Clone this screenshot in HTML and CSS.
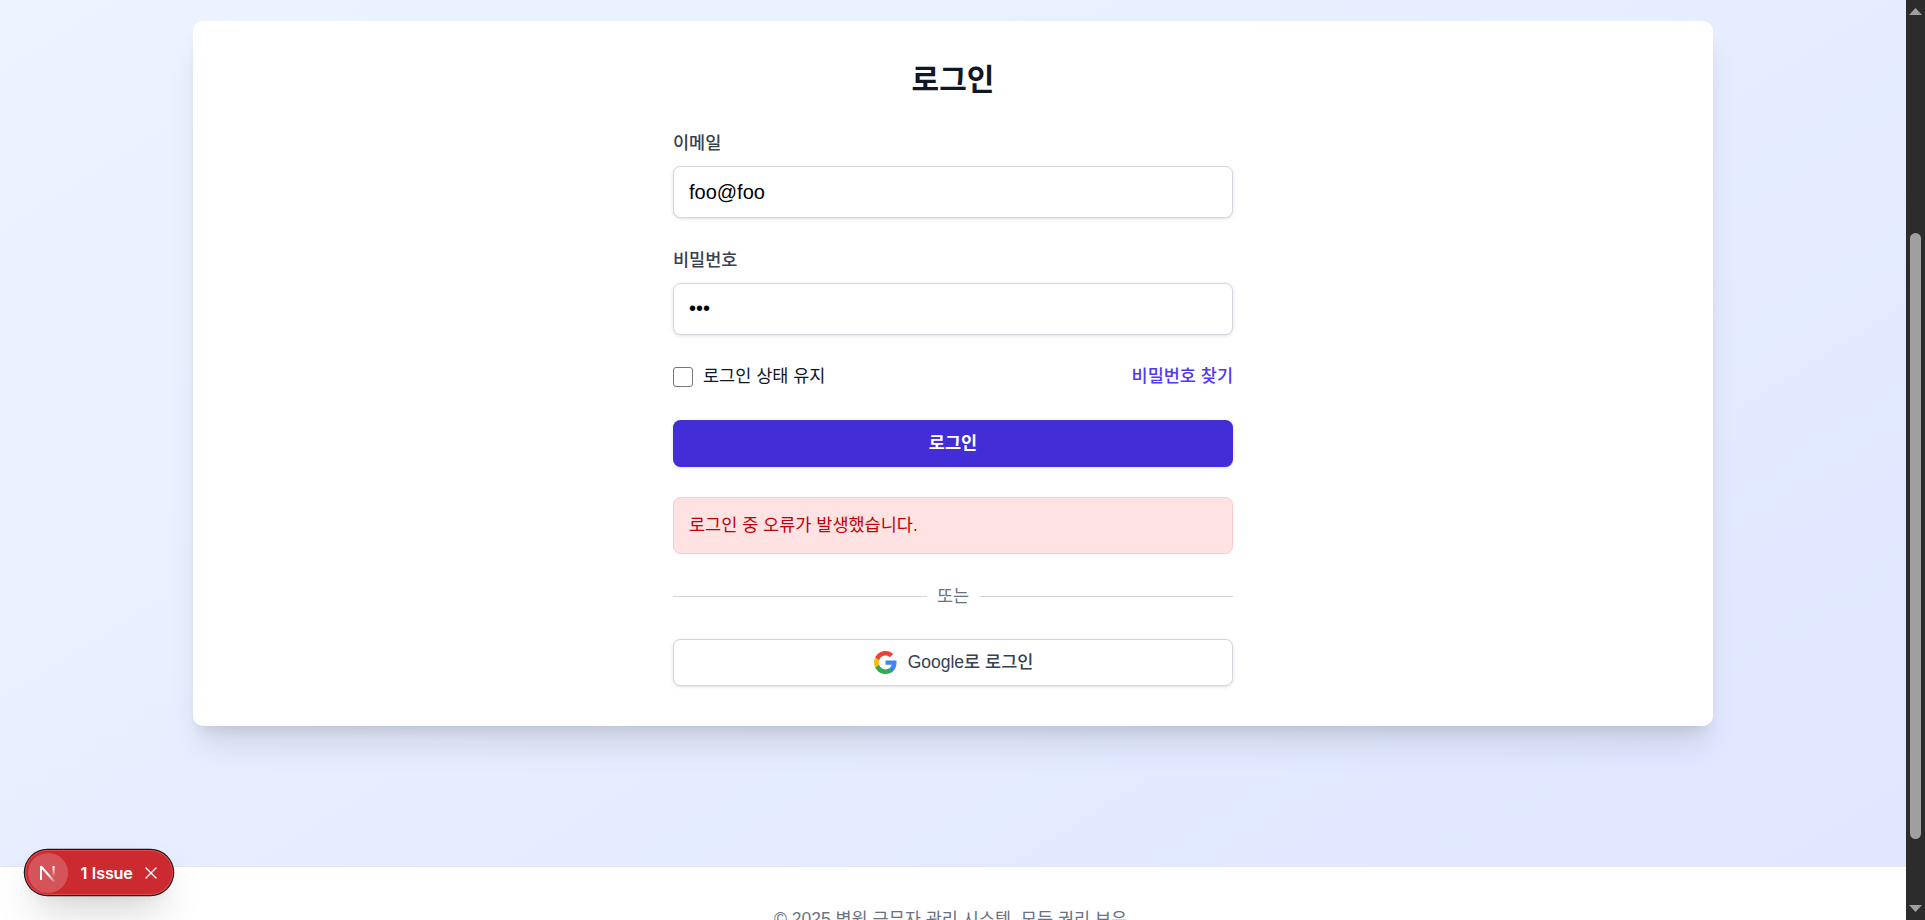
FILE: index.html
```html
<!DOCTYPE html>
<html lang="ko">
<head>
<meta charset="utf-8">
<title>로그인</title>
<link rel="stylesheet" href="styles.css">
</head>
<body>
<div class="window">
  <div class="page">
    <main class="main">
      <section class="card">
        <form class="form">
          <h1 class="title">로그인</h1>
          <div class="field">
            <label class="label" for="email">이메일</label>
            <input class="input" id="email" type="text" value="foo@foo">
          </div>
          <div class="field">
            <label class="label" for="password">비밀번호</label>
            <input class="input password" id="password" type="password" value="foo">
          </div>
          <div class="options">
            <label class="remember"><input class="checkbox" type="checkbox"><span>로그인 상태 유지</span></label>
            <a class="link">비밀번호 찾기</a>
          </div>
          <button class="submit" type="button">로그인</button>
          <div class="error">로그인 중 오류가 발생했습니다.</div>
          <div class="divider"><span>또는</span></div>
          <button class="google" type="button">
            <svg class="google-icon" viewBox="0 0 24 24">
              <path fill="#4285f4" d="M22.56 12.25c0-.78-.07-1.53-.2-2.25H12v4.26h5.92c-.26 1.37-1.04 2.53-2.21 3.31v2.77h3.57c2.08-1.92 3.28-4.74 3.28-8.09z"/>
              <path fill="#34a853" d="M12 23c2.97 0 5.46-.98 7.28-2.66l-3.57-2.77c-.98.66-2.23 1.06-3.71 1.06-2.86 0-5.29-1.93-6.16-4.53H2.18v2.84C3.99 20.53 7.7 23 12 23z"/>
              <path fill="#fbbc05" d="M5.84 14.09c-.22-.66-.35-1.36-.35-2.09s.13-1.43.35-2.09V7.07H2.18C1.43 8.55 1 10.22 1 12s.43 3.45 1.18 4.93l3.66-2.84z"/>
              <path fill="#ea4335" d="M12 5.38c1.62 0 3.06.56 4.21 1.64l3.15-3.15C17.45 2.09 14.97 1 12 1 7.7 1 3.99 3.47 2.18 7.07l3.66 2.84c.87-2.6 3.3-4.53 6.16-4.53z"/>
            </svg>
            <span>Google로 로그인</span>
          </button>
        </form>
      </section>
    </main>
    <footer class="footer">© 2025 병원 근무자 관리 시스템. 모든 권리 보유.</footer>
  </div>
  <div class="scrollbar">
    <svg class="arrow" viewBox="0 0 13 7"><path d="M6.5 0 13 7H0z"/></svg>
    <div class="thumb"></div>
    <svg class="arrow arrow-down" viewBox="0 0 13 7"><path d="M0 0h13L6.5 7z"/></svg>
  </div>
</div>
<div class="issue">
  <span class="issue-logo">
    <svg width="18" height="20" viewBox="0 0 18 20" fill="none">
      <defs>
        <linearGradient id="stem" x1="0" y1="4" x2="0" y2="14" gradientUnits="userSpaceOnUse"><stop stop-color="#fff"/><stop offset="1" stop-color="#fff" stop-opacity="0"/></linearGradient>
        <linearGradient id="slash" x1="10" y1="11" x2="17" y2="19" gradientUnits="userSpaceOnUse"><stop stop-color="#fff"/><stop offset="1" stop-color="#fff" stop-opacity="0"/></linearGradient>
      </defs>
      <path d="M2 3.4 15.6 19" stroke="url(#slash)" stroke-width="2.2"/>
      <path d="M2 17V3" stroke="#fff" stroke-width="2"/>
      <path d="M14.6 3v11" stroke="url(#stem)" stroke-width="2"/>
    </svg>
  </span>
  <span class="issue-text">1 Issue</span>
  <svg class="issue-close" viewBox="0 0 12 12"><path d="M1 1l10 10M11 1 1 11" stroke="#fff" stroke-width="1.4" stroke-linecap="round"/></svg>
</div>
</body>
</html>
```
FILE: styles.css
```css
* { box-sizing: border-box; }
body {
  margin: 0;
  overflow: hidden;
  font-family: "Liberation Sans", "Noto Sans CJK KR", sans-serif;
  font-size: 17.5px;
  line-height: 25px;
  color: #101828;
}
.window { display: flex; height: 920px; overflow: hidden; }
.page { flex: 1; display: flex; flex-direction: column; }
.main {
  flex: 0 0 866px;
  padding-top: 21px;
  background: linear-gradient(to bottom right in oklab, #eff6ff, #e0e7ff) 0 -325px / 100% 1191px no-repeat;
}
.card {
  width: 1520px;
  height: 705px;
  margin: 0 auto;
  padding-top: 39px;
  background: #fff;
  border-radius: 10px;
  box-shadow: 0 25px 31px -6px rgb(0 0 0 / .1), 0 10px 12.5px -7.5px rgb(0 0 0 / .1);
}
.form { width: 560px; margin: 0 auto; display: flex; flex-direction: column; }
.title { margin: 0 0 31px; font-size: 30px; line-height: 40px; font-weight: 700; text-align: center; }
.field { display: flex; flex-direction: column; gap: 10px; margin-bottom: 30px; }
.label { font-weight: 500; color: #364153; }
.input {
  height: 52px;
  padding: 0 15px;
  border: 1px solid #d1d5dc;
  border-radius: 7.5px;
  background: #fff;
  color: #000;
  font: 20px "Liberation Sans", sans-serif;
  box-shadow: 0 1px 4px rgb(0 0 0 / .1), 0 1px 2px -1px rgb(0 0 0 / .1);
}
.password { padding-bottom: 2px; }
.options { display: flex; justify-content: space-between; align-items: center; height: 25px; margin: -1px 0 31px; }
.remember { display: flex; align-items: center; gap: 10px; }
.checkbox { appearance: none; width: 20px; height: 20px; margin: 0; border: 1px solid #767676; border-radius: 3px; background: #fff; }
.link { font-weight: 500; color: #4f39f6; }
.submit, .google { font: 500 17.5px/25px "Liberation Sans", "Noto Sans CJK KR", sans-serif; border-radius: 7.5px; padding: 0; box-shadow: 0 1px 4px rgb(0 0 0 / .1), 0 1px 2px -1px rgb(0 0 0 / .1); }
.submit { height: 47px; border: 0; background: #432dd7; color: #fff; font-weight: 600; }
.error { height: 57px; margin: 30px 0; padding: 15px; border: 1px solid #ffc9c9; border-radius: 7.5px; background: #ffe2e2; color: #c10007; }
.divider { display: flex; align-items: center; gap: 10px; color: #6a7282; }
.divider::before, .divider::after { content: ""; flex: 1; height: 1px; background: #d1d5dc; }
.google { height: 47px; margin-top: 30px; border: 1px solid #d1d5dc; background: #fff; color: #364153; display: flex; align-items: center; justify-content: center; gap: 10px; }
.google-icon { width: 25px; height: 25px; }
.footer { flex: 1; padding-top: 40px; border-top: 1px solid #e5e7eb; background: #fff; color: #6a7282; text-align: center; overflow: hidden; }
.scrollbar { width: 19px; padding: 8px 0; display: flex; flex-direction: column; align-items: center; background: #2c2c2c; }
.arrow { width: 13px; height: 7px; fill: #9f9f9f; }
.arrow-down { margin-top: auto; }
.thumb { width: 11px; height: 606px; margin-top: 218px; border-radius: 6px; background: #9f9f9f; }
.issue {
  position: absolute;
  left: 25px;
  top: 850px;
  width: 148px;
  height: 45px;
  padding-left: 3px;
  display: flex;
  align-items: center;
  border-radius: 23px;
  background: #ca2a30;
  color: #fff;
  box-shadow: inset 0 0 0 1px #e5484d, 0 0 0 1.25px #171717, 0 20px 40px -10px rgb(0 0 0 / .25), 0 5px 10px rgb(0 0 0 / .04);
}
.issue-logo { width: 40px; height: 40px; border-radius: 50%; display: flex; align-items: center; justify-content: center; background: rgb(255 255 255 / .2); }
.issue-text { width: 52px; margin-left: 12.5px; font: 600 16.25px/20px Inter, sans-serif; letter-spacing: -.2px; word-spacing: .8px; white-space: nowrap; }
.issue-close { width: 12px; height: 12px; margin-left: 12px; }
```
